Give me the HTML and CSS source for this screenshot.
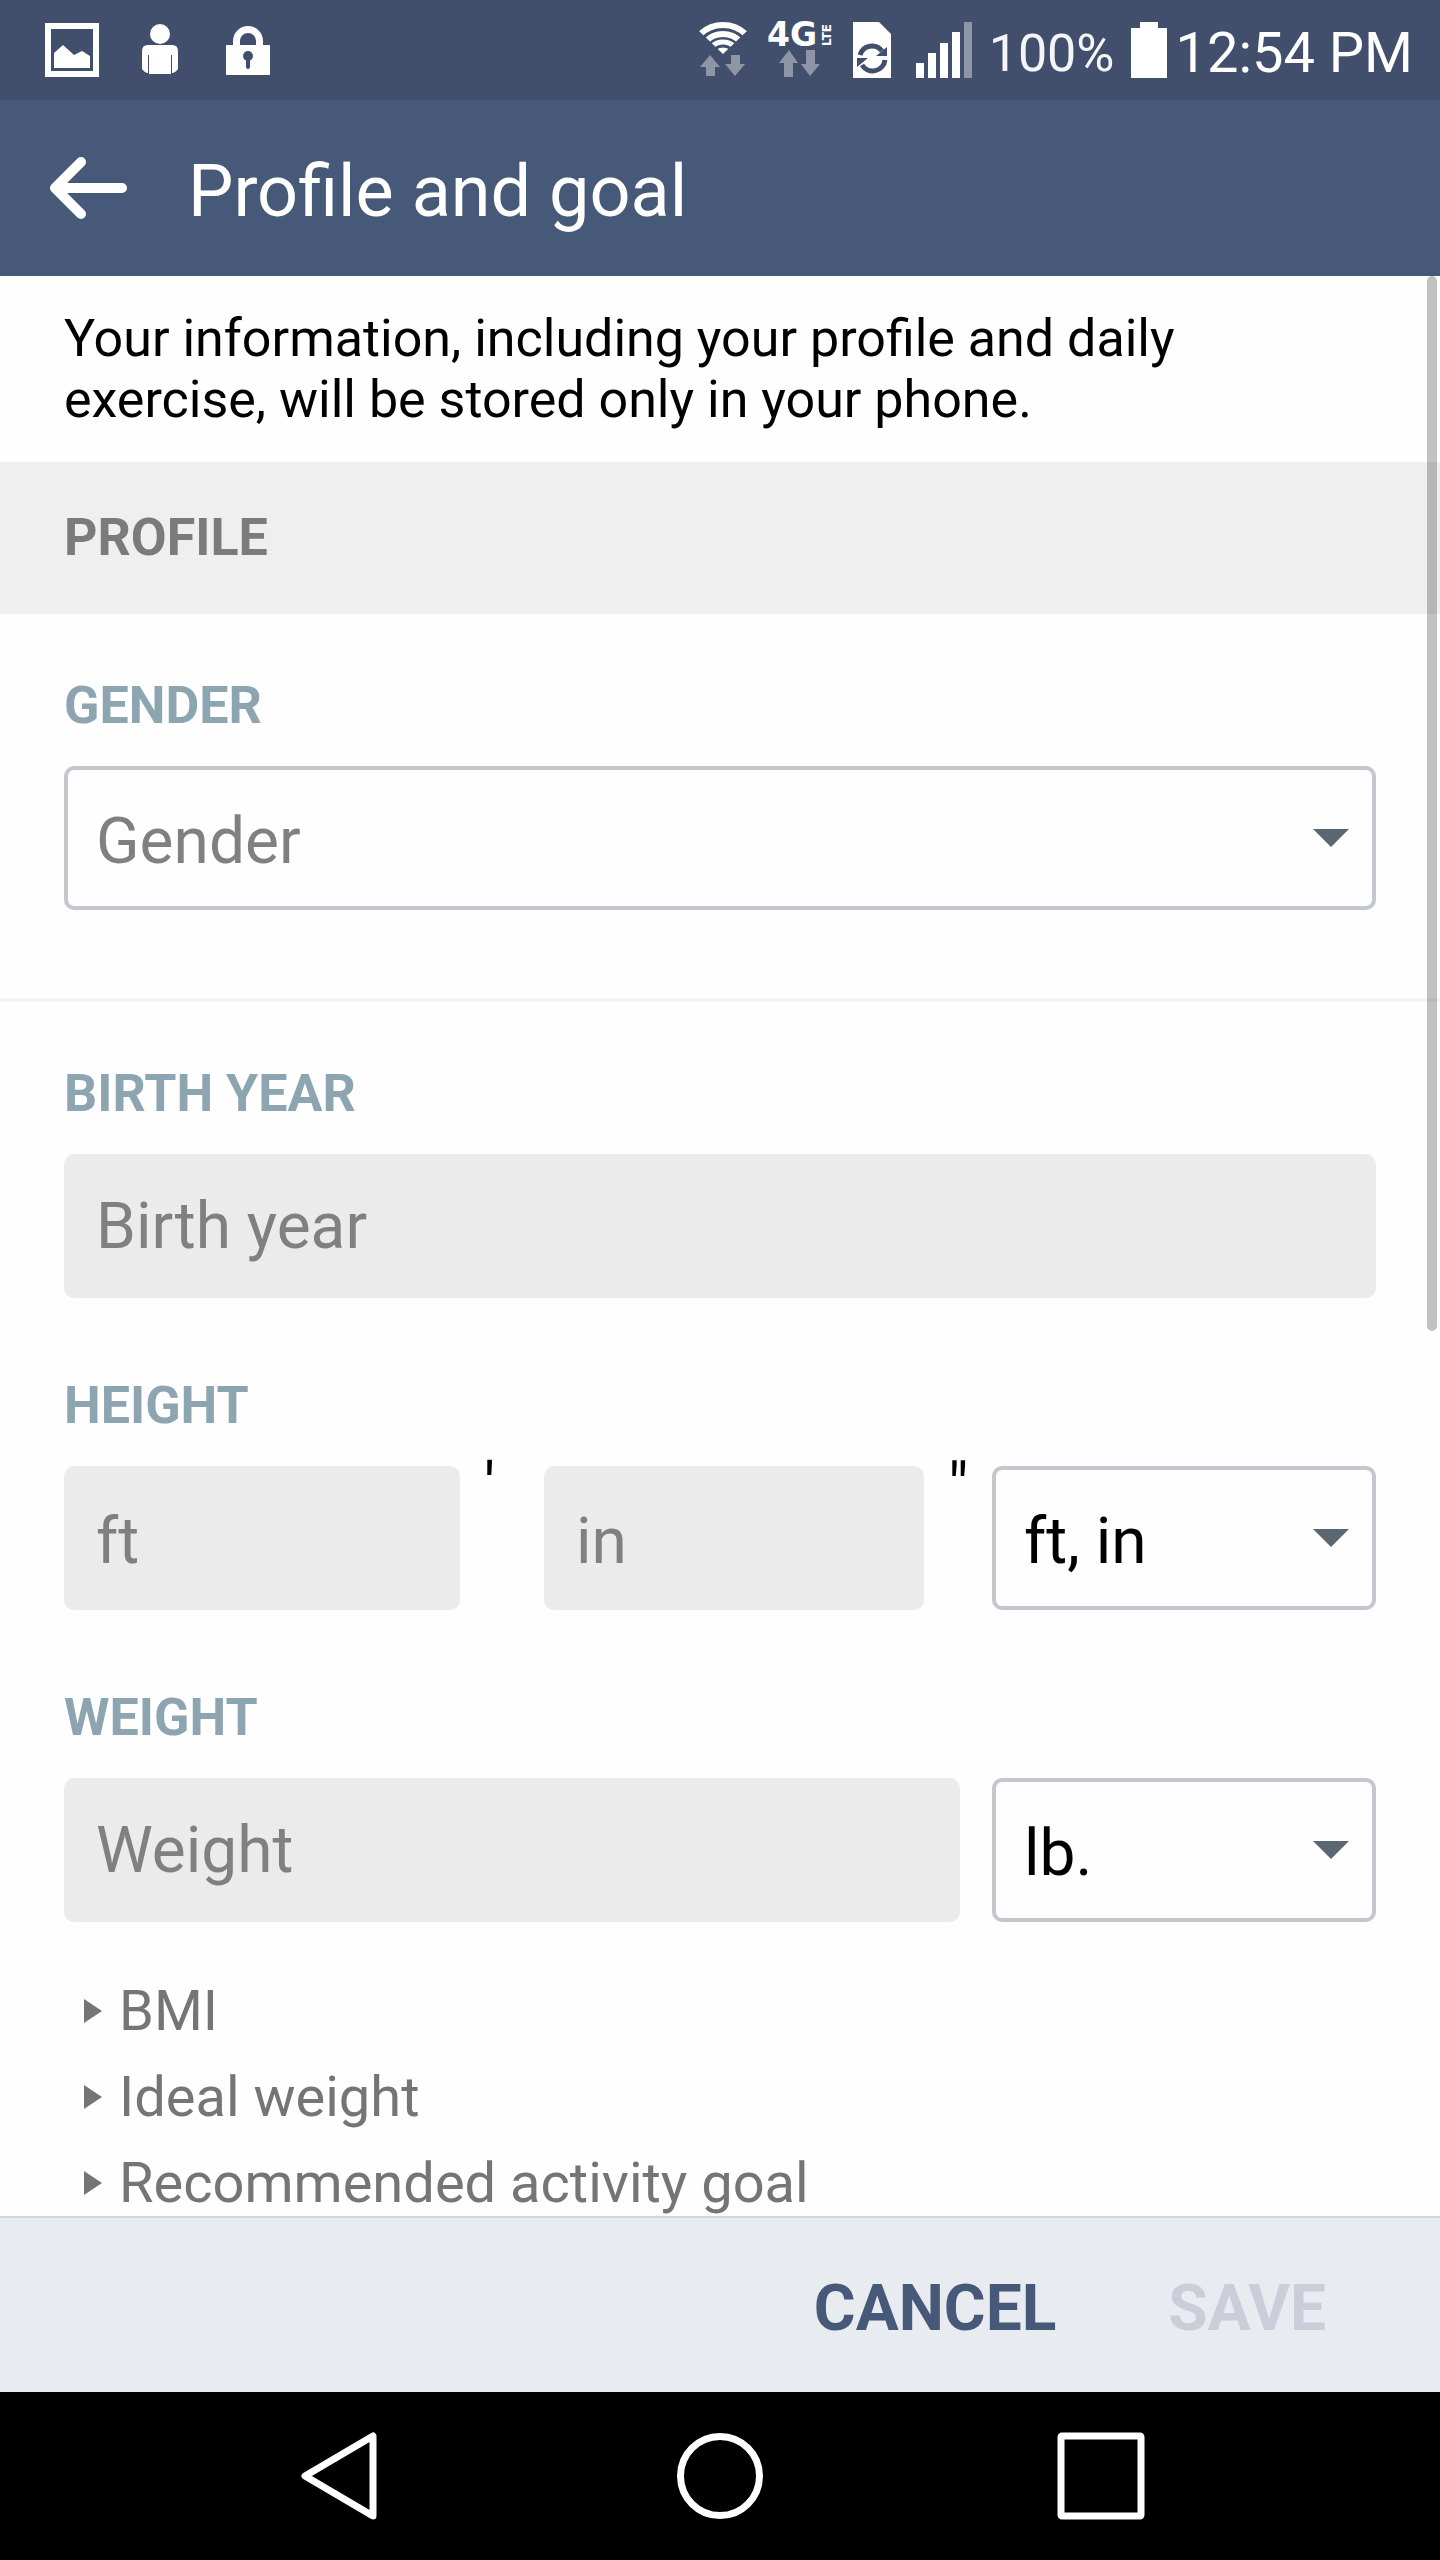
FILE: index.html
```html
<!DOCTYPE html>
<html lang="en">
<head>
    <meta charset="UTF-8">
    <meta name="viewport" content="width=device-width, initial-scale=1.0">
    <title>Profile and goal</title>
    <link rel="stylesheet" href="styles.css">
</head>
<body>
    <!-- Status bar -->
    <div class="status-bar">
        <div class="notifications">
            <svg width="54" height="56" viewBox="0 0 54 56">
                <rect x="3" y="4" width="48" height="48" fill="none" stroke="#fff" stroke-width="6"/>
                <path d="M9 31L18 23L29 33L37 29L45 34V46H9Z" fill="#fff"/>
            </svg>
            <svg width="54" height="56" viewBox="0 0 54 56" fill="#fff">
                <circle cx="27" cy="12" r="10"/>
                <path d="M15 23H39Q45 23 45 29V47Q42 51 39 51V33H38V52H16V33H15V51Q12 51 9 47V29Q9 23 15 23Z"/>
            </svg>
            <svg width="54" height="56" viewBox="0 0 54 56">
                <path d="M15.500 26V19A11.500 11.500 0 0 1 38.500 19V26" fill="none" stroke="#fff" stroke-width="7"/>
                <rect x="5" y="23" width="44" height="30" rx="1" fill="#fff"/>
                <circle cx="27" cy="34" r="5" fill="#414f6d"/>
                <path d="M27 35V45" stroke="#414f6d" stroke-width="4" stroke-linecap="round"/>
            </svg>
        </div>
        <div class="indicators">
            <div class="signals">
                <svg width="48" height="56" viewBox="0 0 48 56">
                    <clipPath id="fan"><path d="M24 32L-2 7V-2H50V7Z"/></clipPath>
                    <g clip-path="url(#fan)" fill="none" stroke="#fff">
                        <circle cx="24" cy="36" r="33" stroke-width="6"/>
                        <circle cx="24" cy="36" r="24" stroke-width="6"/>
                        <circle cx="24" cy="36" r="16" stroke-width="5"/>
                        <circle cx="24" cy="36" r="6" stroke-width="9"/>
                    </g>
                    <path d="M11 33L21 45H16V54H7V45H1ZM32 33H41V42H46L36 54L26 42H32Z" fill="#8d95a7"/>
                </svg>
                <svg class="network" width="65" height="56" viewBox="0 0 65 56">
                    <text class="network-type" x="0" y="24">4G</text>
                    <text class="network-lte" transform="translate(64 24) rotate(-90)">LTE</text>
                    <path d="M22 28L31 41H26V55H17V41H12ZM39 28H48V42H53L43 54L34 42H39Z" fill="#8d95a7"/>
                </svg>
                <svg width="40" height="56" viewBox="0 0 40 56">
                    <path d="M1 0H27L39 12V56H1Z" fill="#fff"/>
                    <path d="M8 33A12.500 12.500 0 0 1 30 29M33 38A12.500 12.500 0 0 1 10 43" fill="none" stroke="#414f6d" stroke-width="5"/>
                    <path d="M35 25V34H24ZM5 45V36H16Z" fill="#414f6d"/>
                </svg>
                <svg width="60" height="56" viewBox="0 0 60 56" fill="#fff">
                    <path d="M4 41h8v15h-8zM16 31h8v25h-8zM28 21h8v35h-8zM40 10h8v46h-8z"/>
                    <path d="M52 0h8v56h-8z" fill="#8d95a7"/>
                </svg>
            </div>
            <span class="battery-level">100%</span>
            <div class="battery-time">
                <svg width="36" height="56" viewBox="0 0 36 56">
                    <path d="M9 0H27V6H36V56H0V6H9Z" fill="#fff"/>
                </svg>
                <span class="time">12:54 PM</span>
            </div>
        </div>
    </div>

    <header class="app-bar">
        <button class="back" type="button" aria-label="Back">
            <svg width="78" height="64" viewBox="0 0 78 64" fill="none" stroke="#fff" stroke-width="10" stroke-linecap="round" stroke-linejoin="round">
                <path d="M31 6L5 32L31 58M7 32H72"/>
            </svg>
        </button>
        <h1 class="title">Profile and goal</h1>
    </header>

    <div class="content">
        <form class="scroll-area" id="profileForm">
            <p class="intro">Your information, including your profile and daily exercise, will be stored only in your phone.</p>
            <h2 class="section-title">PROFILE</h2>

            <div class="section">
                <label class="label" for="gender">GENDER</label>
                <div class="select-box">
                    <select class="field select placeholder" id="gender">
                        <option value="">Gender</option>
                        <option>Female</option>
                        <option>Male</option>
                    </select>
                </div>
            </div>

            <div class="section">
                <div class="group">
                    <label class="label" for="birthYear">BIRTH YEAR</label>
                    <input class="field input" type="text" id="birthYear" placeholder="Birth year">
                </div>
                <div class="group">
                    <label class="label" for="heightFt">HEIGHT</label>
                    <div class="height-row">
                        <input class="field input input-small" type="text" id="heightFt" placeholder="ft">
                        <span class="mark">'</span>
                        <input class="field input input-small" type="text" id="heightIn" aria-label="Height, inches" placeholder="in">
                        <span class="mark">"</span>
                        <div class="select-box">
                            <select class="field select" aria-label="Height unit">
                                <option>ft, in</option>
                                <option>cm</option>
                            </select>
                        </div>
                    </div>
                </div>
                <div class="group">
                    <label class="label" for="weight">WEIGHT</label>
                    <div class="weight-row">
                        <input class="field input" type="text" id="weight" placeholder="Weight">
                        <div class="select-box">
                            <select class="field select" aria-label="Weight unit">
                                <option>lb.</option>
                                <option>kg</option>
                            </select>
                        </div>
                    </div>
                </div>
            </div>

            <ul class="more">
                <li><button class="more-item" type="button">BMI</button></li>
                <li><button class="more-item" type="button">Ideal weight</button></li>
                <li><button class="more-item" type="button">Recommended activity goal</button></li>
            </ul>
        </form>
        <div class="scroll-thumb"></div>
    </div>

    <footer class="actions">
        <button class="action" type="button">CANCEL</button>
        <button class="action" type="submit" form="profileForm" disabled>SAVE</button>
    </footer>

    <!-- System navigation -->
    <nav class="nav-bar">
        <button class="nav-button" type="button" aria-label="Back">
            <svg width="88" height="88" viewBox="0 0 88 88">
                <path d="M78 4V84L10 44Z" stroke-linejoin="round"/>
            </svg>
        </button>
        <button class="nav-button" type="button" aria-label="Home">
            <svg width="88" height="88" viewBox="0 0 88 88">
                <circle cx="44" cy="44" r="39.500"/>
            </svg>
        </button>
        <button class="nav-button" type="button" aria-label="Recent apps">
            <svg width="88" height="88" viewBox="0 0 88 88">
                <rect x="4" y="4" width="80" height="80" rx="1"/>
            </svg>
        </button>
    </nav>
</body>
</html>
```
FILE: styles.css
```css
* {
    box-sizing: border-box;
}
body {
    margin: 0;
    height: 100vh;
    display: flex;
    flex-direction: column;
    font-family: Roboto, sans-serif;
    font-size: 52px;
    color: #000;
    background-color: #fefefe;
}
button, input, select {
    font-family: inherit;
    margin: 0;
    padding: 0;
    border: none;
    background: none;
}
svg {
    display: block;
}

/* Status bar */
.status-bar {
    display: flex;
    justify-content: space-between;
    align-items: center;
    height: 100px;
    flex-shrink: 0;
    padding: 0 27px 0 45px;
    color: #fff;
    background-color: #414f6d;
}
.notifications {
    display: flex;
    gap: 34px;
}
.indicators {
    display: flex;
    align-items: center;
    gap: 17px;
}
.signals {
    display: flex;
    gap: 20px;
}
.network {
    overflow: visible;
    fill: #fff;
    font-family: "DejaVu Sans", sans-serif;
    font-weight: bold;
}
.network-type {
    font-size: 33px;
}
.network-lte {
    font-size: 12px;
}
.battery-level {
    padding-top: 6px;
    color: #f4f5f7;
}
.battery-time {
    display: flex;
    align-items: center;
    gap: 8px;
}
.time {
    padding-top: 6px;
    font-size: 56px;
}

/* App bar */
.app-bar {
    display: flex;
    align-items: center;
    gap: 60px;
    height: 176px;
    flex-shrink: 0;
    padding: 0 50px;
    color: #fff;
    background-color: #465978;
}
.title {
    margin: 0;
    padding-top: 6px;
    font-size: 72px;
    font-weight: normal;
}

/* Content */
.content {
    position: relative;
    flex: 1;
    min-height: 0;
}
.scroll-area {
    height: 100%;
    overflow-y: auto;
    scrollbar-width: none;
}
.scroll-thumb {
    position: absolute;
    top: 0;
    right: 3px;
    width: 10px;
    height: 54.4%;
    border-radius: 5px;
    background-color: rgba(0, 0, 0, 0.24);
}
.intro {
    margin: 0;
    padding: 32px 64px;
    line-height: 61px;
}
.section-title {
    margin: 0;
    padding: 0 64px;
    font-size: 52px;
    line-height: 152px;
    color: #7b7b7b;
    background-color: #efefef;
}
.section {
    padding: 61px 64px 0;
}
.section + .section {
    margin-top: 88px;
    border-top: 4px solid #f3f3f3;
}
.group + .group {
    margin-top: 77px;
}
.label {
    display: block;
    margin-bottom: 30px;
    line-height: 61px;
    font-weight: bold;
    color: #8da5b1;
}
.field {
    display: block;
    width: 100%;
    height: 144px;
    border-radius: 10px;
    font-size: 64px;
    color: #000;
}
.input {
    padding: 0 32px;
    background-color: #ebebeb;
}
.input-small {
    padding-top: 6px;
}
.input::placeholder, .placeholder {
    color: #808080;
}
.select-box {
    position: relative;
}
.select {
    appearance: none;
    padding: 6px 80px 0 28px;
    border: 4px solid #c4c8ce;
    background-color: #fefefe;
}
.select-box::after {
    content: "";
    position: absolute;
    top: 63px;
    right: 27px;
    border: 18px solid transparent;
    border-top-color: #5b6770;
    border-bottom: none;
    pointer-events: none;
}
.height-row {
    display: grid;
    grid-template-columns: minmax(0, 396fr) 84px minmax(0, 380fr) 68px 384px;
}
.weight-row {
    display: grid;
    grid-template-columns: minmax(0, 1fr) 384px;
    gap: 32px;
}
.mark {
    padding-left: 24px;
    font-size: 64px;
    line-height: 44px;
}
.more {
    margin: 0;
    padding: 46px 84px 0;
    list-style: none;
}
.more-item {
    display: flex;
    align-items: center;
    gap: 17px;
    font-size: 56px;
    line-height: 86px;
    color: #757575;
}
.more-item::before {
    content: "";
    border: 12px solid transparent;
    border-left: 18px solid #757575;
    border-right: none;
}

/* Bottom buttons */
.actions {
    display: flex;
    justify-content: flex-end;
    align-items: center;
    gap: 112px;
    height: 176px;
    flex-shrink: 0;
    padding: 6px 114px 0;
    border-top: 2px solid #d6d7da;
    background-color: #e8ebf0;
}
.action {
    font-size: 64px;
    font-weight: bold;
    color: #465978;
}
.action:disabled {
    color: #cbced9;
}
.nav-bar {
    display: grid;
    grid-template-columns: repeat(3, 1fr);
    align-items: center;
    height: 168px;
    flex-shrink: 0;
    padding: 0 148px;
    background-color: #000;
}
.nav-button {
    display: flex;
    justify-content: center;
}
.nav-button svg {
    fill: none;
    stroke: #fff;
    stroke-width: 7px;
}
```
